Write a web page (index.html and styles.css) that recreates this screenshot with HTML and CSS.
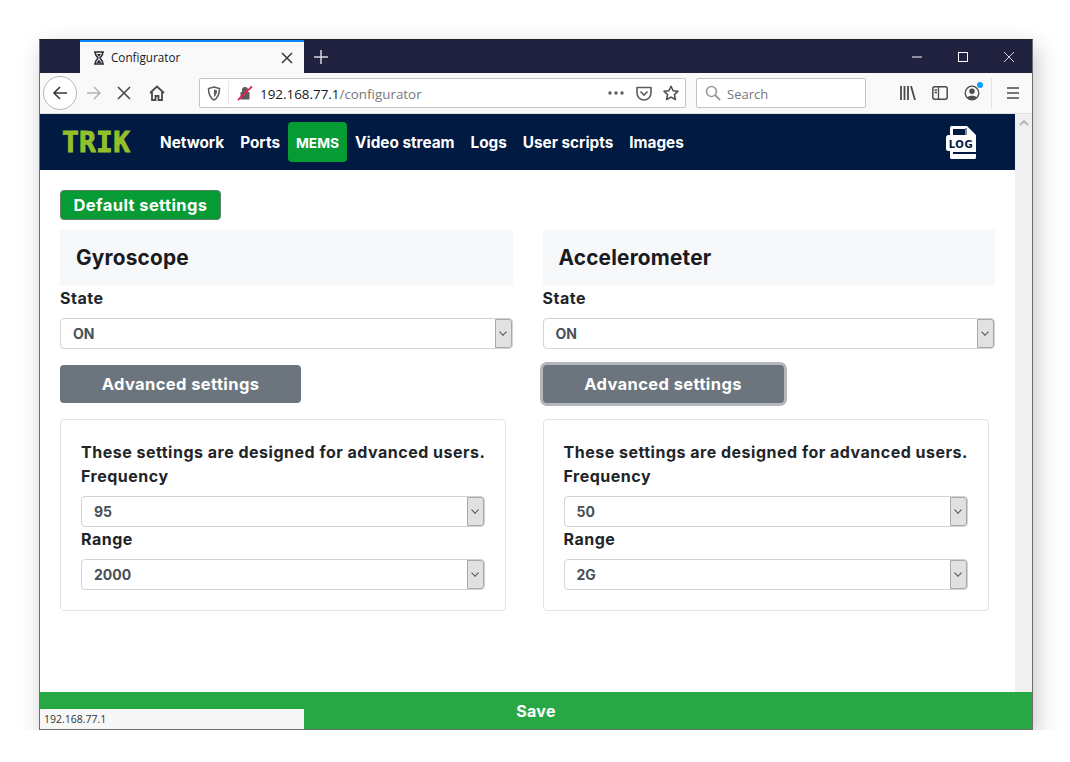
FILE: index.html
```html
<!DOCTYPE html>
<html lang="en">
<head>
    <meta charset="UTF-8">
    <title>Configurator</title>
    <link rel="stylesheet" href="styles.css">
</head>
<body>

    <div class="window">

        <div class="titlebar">
            <div class="tab">
                <svg class="tab-icon" width="14" height="14" viewBox="0 0 14 14"><path d="M2 1h10M2 13h10M3.500 1v2.500L6 7l-2.500 3.500V13h7v-2.500L8 7l2.500-3.500V1z" fill="none" stroke="#2b2b33" stroke-width="1.500"/><path d="M4.500 12l2.500-3.500L9.500 12zM5 3h4L7 6z" fill="#2b2b33"/></svg>
                <span class="tab-title">Configurator</span>
                <svg class="tab-close" width="12" height="12" viewBox="0 0 12 12"><path d="M1 1l10 10M11 1L1 11" stroke="#38383d" stroke-width="1.500"/></svg>
            </div>
            <svg class="new-tab" width="14" height="14" viewBox="0 0 14 14"><path d="M7 0v14M0 7h14" stroke="#d8d8de" stroke-width="1.500"/></svg>
            <div class="win-controls">
                <svg width="10" height="10" viewBox="0 0 10 10"><path d="M0 5h10" stroke="#fff"/></svg>
                <svg width="10" height="10" viewBox="0 0 10 10"><rect x="0.500" y="0.500" width="9" height="9" fill="none" stroke="#fff"/></svg>
                <svg width="10" height="10" viewBox="0 0 10 10"><path d="M0 0l10 10M10 0L0 10" stroke="#fff" stroke-width="0.800"/></svg>
            </div>
        </div>

        <div class="toolbar">
            <div class="back-btn">
                <svg width="16" height="16" viewBox="0 0 16 16"><path d="M15 8H2M8 2L2 8l6 6" fill="none" stroke="#38383d" stroke-width="1.600"/></svg>
            </div>
            <svg class="tool-forward" width="16" height="16" viewBox="0 0 16 16"><path d="M1 8h13M8 2l6 6-6 6" fill="none" stroke="#b5b5b8" stroke-width="1.600"/></svg>
            <svg class="tool-stop" width="14" height="14" viewBox="0 0 14 14"><path d="M1 1l12 12M13 1L1 13" stroke="#4a4a4f" stroke-width="1.600"/></svg>
            <svg class="tool-home" width="16" height="16" viewBox="0 0 16 16"><path d="M1 8l7-6.500L15 8M3 7v8h3.500v-4h3v4H13V7" fill="none" stroke="#4a4a4f" stroke-width="1.800"/></svg>

            <div class="urlbar">
                <svg class="url-shield" width="14" height="15" viewBox="0 0 14 15"><path d="M7 1l5.500 1.500c0 5-1 9-5.500 11.500C2.500 11.500 1.500 7.500 1.500 2.500z" fill="none" stroke="#5b5b60" stroke-width="1.500"/><path d="M7 3.500l3 .8c0 3-.6 5-3 6.700z" fill="#5b5b60"/></svg>
                <span class="url-sep"></span>
                <svg class="url-lock" width="16" height="16" viewBox="0 0 16 16"><path d="M5 7V5a3 3 0 016 0v2h1.500v7.500h-9V7z" fill="#5b5b60"/><path d="M1 15L15 1.500" stroke="#e22850" stroke-width="1.800"/></svg>
                <span class="url-text">192.168.77.1<span class="url-path">/configurator</span></span>
                <svg class="url-dots" width="16" height="4" viewBox="0 0 16 4"><circle cx="2" cy="2" r="1.700" fill="#5b5b60"/><circle cx="8" cy="2" r="1.700" fill="#5b5b60"/><circle cx="14" cy="2" r="1.700" fill="#5b5b60"/></svg>
                <svg width="16" height="15" viewBox="0 0 16 15"><path d="M1 1.500h14v5.500a7 7 0 01-14 0z" fill="none" stroke="#5b5b60" stroke-width="1.600" stroke-linejoin="round"/><path d="M4.500 5.500L8 9l3.500-3.500" fill="none" stroke="#5b5b60" stroke-width="1.600"/></svg>
                <svg class="url-star" width="16" height="16" viewBox="0 0 16 16"><path d="M8 1.200l2.100 4.500 4.900.6-3.600 3.300 1 4.900L8 12.100l-4.400 2.400 1-4.900L1 6.300l4.900-.6z" fill="none" stroke="#4a4a4f" stroke-width="1.500" stroke-linejoin="round"/></svg>
            </div>

            <div class="searchbar">
                <svg width="16" height="16" viewBox="0 0 16 16"><circle cx="6.500" cy="6.500" r="5" fill="none" stroke="#9a9a9e" stroke-width="1.600"/><path d="M10 10l5 5" stroke="#9a9a9e" stroke-width="1.800"/></svg>
                <span class="search-text">Search</span>
            </div>

            <svg class="tool-library" width="16" height="14" viewBox="0 0 16 14"><path d="M1 0v14M4.500 0v14M8 0v14M11 0l4 14" fill="none" stroke="#4a4a4f" stroke-width="1.800"/></svg>
            <svg class="tool-sidebar" width="16" height="14" viewBox="0 0 16 14"><rect x="0.800" y="0.800" width="14.400" height="12.400" rx="2" fill="none" stroke="#4a4a4f" stroke-width="1.500"/><path d="M6.500 1v12M2.500 4h2.500M2.500 6.500h2.500" stroke="#4a4a4f" stroke-width="1.300"/></svg>
            <span class="tool-account">
                <svg width="16" height="16" viewBox="0 0 16 16"><circle cx="8" cy="8" r="6.800" fill="none" stroke="#4a4a4f" stroke-width="1.300"/><circle cx="8" cy="6.300" r="2.700" fill="#4a4a4f"/><path d="M3.300 12.500c1-2.500 8.400-2.500 9.400 0-2.500 2.400-6.900 2.400-9.400 0z" fill="#4a4a4f"/></svg>
                <span class="account-dot"></span>
            </span>
            <span class="tool-sep"></span>
            <svg class="tool-menu" width="12" height="12" viewBox="0 0 12 12"><path d="M0 1h12M0 6h12M0 11h12" stroke="#4a4a4f" stroke-width="1.500"/></svg>
        </div>

        <div class="viewport">
            <div class="page">
                <nav class="navbar">
                    <span class="logo">TRIK</span>
                    <a class="nav-link" href="#">Network</a>
                    <a class="nav-link" href="#">Ports</a>
                    <a class="nav-link active" href="#">MEMS</a>
                    <a class="nav-link" href="#">Video stream</a>
                    <a class="nav-link" href="#">Logs</a>
                    <a class="nav-link" href="#">User scripts</a>
                    <a class="nav-link" href="#">Images</a>
                    <svg class="log-icon" width="31" height="33" viewBox="0 0 31 33">
                        <path d="M4 1.500A1.500 1.500 0 015.500 0H21l9 9v22.500a1.500 1.500 0 01-1.500 1.500H5.500A1.500 1.500 0 014 31.500z" fill="#fff"/>
                        <path d="M7 3h12v7H7z" fill="#001a42"/>
                        <path d="M20 2v8h8" fill="none" stroke="#001a42" stroke-width="1"/>
                        <rect x="0" y="9" width="30" height="16" rx="2.500" fill="#fff"/>
                        <text x="15" y="21.500" text-anchor="middle" class="log-text">LOG</text>
                        <path d="M7 27h23" stroke="#001a42" stroke-width="2"/>
                    </svg>
                </nav>

                <div class="main">
                    <button class="btn btn-default">Default settings</button>

                    <div class="columns">
                        <section class="sensor">
                            <h2 class="sensor-title">Gyroscope</h2>
                            <label class="field-label">State</label>
                            <div class="select"><span>ON</span><i class="select-arrow"></i></div>
                            <button class="btn btn-advanced">Advanced settings</button>
                            <div class="card">
                                <p class="card-note">These settings are designed for advanced users.</p>
                                <label class="field-label">Frequency</label>
                                <div class="select"><span>95</span><i class="select-arrow"></i></div>
                                <label class="field-label">Range</label>
                                <div class="select"><span>2000</span><i class="select-arrow"></i></div>
                            </div>
                        </section>

                        <section class="sensor">
                            <h2 class="sensor-title">Accelerometer</h2>
                            <label class="field-label">State</label>
                            <div class="select"><span>ON</span><i class="select-arrow"></i></div>
                            <button class="btn btn-advanced focused">Advanced settings</button>
                            <div class="card">
                                <p class="card-note">These settings are designed for advanced users.</p>
                                <label class="field-label">Frequency</label>
                                <div class="select"><span>50</span><i class="select-arrow"></i></div>
                                <label class="field-label">Range</label>
                                <div class="select"><span>2G</span><i class="select-arrow"></i></div>
                            </div>
                        </section>
                    </div>
                </div>
            </div>
            <div class="scrollbar">
                <svg width="10" height="6" viewBox="0 0 10 6"><path d="M1 5l4-4 4 4" fill="none" stroke="#b5b5b5" stroke-width="1.800"/></svg>
            </div>

            <div class="save-bar">Save</div>
            <div class="status">192.168.77.1</div>
        </div>
    </div>

</body>
</html>
```

FILE: styles.css
```css
body {
    margin: 0;
    padding: 39px 0 0 39px;
    background-color: #ffffff;
    font-family: Inter, 'Liberation Sans', sans-serif;
    color: #212529;
}

.window {
    width: 992px;
    height: 689px;
    border: 1px solid #6e6e6e;
    border-top-color: #222;
    display: flex;
    flex-direction: column;
    box-shadow: 4px 8px 22px rgba(0, 0, 0, 0.22);
}

/* browser chrome */
.titlebar {
    height: 33px;
    background-color: #20223f;
    display: flex;
    align-items: center;
    padding-left: 40px;
    flex-shrink: 0;
}

.tab {
    width: 224px;
    height: 33px;
    box-sizing: border-box;
    border-top: 2px solid #0a84ff;
    background-color: #f9f9fa;
    display: flex;
    align-items: center;
    padding: 0 11px 0 12px;
    font-family: 'Open Sans', sans-serif;
    font-size: 11.700px;
    color: #18181c;
}

.tab-icon {
    margin-right: 5px;
}

.tab-title {
    flex: 1;
    padding-bottom: 2px;
}

.new-tab {
    margin-left: 10px;
}

.win-controls {
    margin-left: auto;
    display: flex;
    gap: 36px;
    padding-right: 18px;
}

.toolbar {
    height: 41px;
    background-color: #f9f9fa;
    border-bottom: 1px solid #e1e1e3;
    box-sizing: border-box;
    display: flex;
    align-items: center;
    padding-left: 3px;
    flex-shrink: 0;
}

.back-btn {
    width: 32px;
    height: 32px;
    border: 1px solid #b8b8ba;
    border-radius: 50%;
    background-color: #ffffff;
    display: flex;
    align-items: center;
    justify-content: center;
}

.tool-forward {
    margin-left: 9px;
}

.tool-stop {
    margin-left: 15px;
}

.tool-home {
    margin-left: 18px;
}

.urlbar {
    width: 487px;
    height: 30px;
    margin-left: 34px;
    box-sizing: border-box;
    background-color: #ffffff;
    border: 1px solid #c4c4c6;
    border-radius: 2px;
    display: flex;
    align-items: center;
    padding: 0 6px 0 7px;
    font-family: 'Open Sans', sans-serif;
    font-size: 13.400px;
    color: #18181c;
}

.url-sep {
    width: 1px;
    height: 24px;
    background-color: #e8e8ea;
    margin: 0 8px 0 7px;
}

.url-text {
    margin-left: 7px;
    padding-top: 2px;
    flex: 1;
}

.url-path {
    color: #77777c;
}

.url-dots {
    margin-right: 12px;
}

.url-star {
    margin-left: 11px;
}

.searchbar {
    width: 170px;
    height: 30px;
    margin-left: 10px;
    box-sizing: border-box;
    background-color: #ffffff;
    border: 1px solid #c4c4c6;
    border-radius: 2px;
    display: flex;
    align-items: center;
    gap: 6px;
    padding-left: 8px;
    font-family: 'Open Sans', sans-serif;
    font-size: 13px;
    color: #77777c;
}

.search-text {
    padding-top: 2px;
}

.tool-library {
    margin-left: 34px;
}

.tool-sidebar {
    margin-left: 16px;
}

.tool-account {
    margin-left: 16px;
    position: relative;
    display: flex;
}

.account-dot {
    position: absolute;
    top: -3px;
    right: -3px;
    width: 6px;
    height: 6px;
    border-radius: 50%;
    background-color: #0a9dff;
}

.tool-sep {
    width: 1px;
    height: 30px;
    margin-left: 11px;
    background-color: #e1e1e3;
}

.tool-menu {
    margin-left: 15px;
}

/* page */
.viewport {
    flex: 1;
    display: flex;
    position: relative;
    overflow: hidden;
}

.page {
    width: 975px;
    flex-shrink: 0;
    background-color: #ffffff;
}

.scrollbar {
    flex: 1;
    background-color: #f0f0f0;
    display: flex;
    justify-content: center;
    align-items: flex-start;
    padding-top: 6px;
}

.navbar {
    height: 56px;
    background-color: #001a42;
    display: flex;
    align-items: center;
    padding-left: 22px;
}

.logo {
    flex: none;
    width: 90px;
    font-family: 'DejaVu Sans Mono', monospace;
    font-size: 28px;
    font-weight: 700;
    letter-spacing: 0.2px;
    color: #93bf2b;
    -webkit-text-stroke: 0.9px #93bf2b;
}

.nav-link {
    height: 40px;
    line-height: 42px;
    padding: 0 8px;
    border-radius: 4px;
    color: #ffffff;
    font-size: 15.300px;
    font-weight: 700;
    text-decoration: none;
}

.nav-link.active {
    background-color: #069b35;
    font-size: 13.800px;
}

.log-icon {
    margin-left: auto;
    margin-right: 38px;
}

.log-text {
    font-family: 'DejaVu Sans', sans-serif;
    font-size: 10px;
    font-weight: 700;
    letter-spacing: 0.6px;
    fill: #001a42;
}

.main {
    padding: 20px 20px 0;
}

.btn {
    display: block;
    border: none;
    border-radius: 4px;
    color: #ffffff;
    font-family: Inter, 'Liberation Sans', sans-serif;
    font-size: 16.500px;
    font-weight: 700;
    letter-spacing: 0.4px;
}

.btn-default {
    width: 161px;
    height: 30px;
    padding: 0;
    background-color: #069b35;
    border: 1px solid #5c7f68;
}

.columns {
    display: flex;
    gap: 30px;
    margin-top: 10px;
}

.sensor {
    width: 452.500px;
}

.sensor-title {
    margin: 0;
    height: 56px;
    line-height: 56px;
    padding-left: 16px;
    background-color: #f7f8fa;
    font-size: 20.800px;
    font-weight: 700;
    letter-spacing: 0.2px;
    color: #1a1a1f;
}

.field-label {
    display: block;
    height: 24px;
    line-height: 24px;
    font-size: 16px;
    font-weight: 700;
    letter-spacing: 0.5px;
    color: #212529;
}

.sensor > .field-label {
    margin-bottom: 8px;
}

.select {
    height: 31px;
    box-sizing: border-box;
    border: 1px solid #ced4da;
    border-radius: 4px;
    background-color: #ffffff;
    display: flex;
    align-items: center;
    justify-content: space-between;
    padding-left: 12px;
    font-size: 14px;
    font-weight: 700;
    color: #495057;
}

.select-arrow {
    width: 17px;
    height: 29px;
    box-sizing: border-box;
    border: 1px solid #a9a9a9;
    border-radius: 0 3px 3px 0;
    background-color: #e1e1e1;
    position: relative;
}

.select-arrow::after {
    content: "";
    position: absolute;
    left: 4px;
    top: 9px;
    width: 5px;
    height: 5px;
    border-right: 1px solid #444;
    border-bottom: 1px solid #444;
    transform: rotate(45deg) scale(0.9);
}

.btn-advanced {
    width: 241px;
    height: 38px;
    margin-top: 16px;
    background-color: #6c757d;
}

.btn-advanced.focused {
    box-shadow: 0 0 0 3px #b3b8bd;
}

.card {
    width: 446px;
    height: 192px;
    box-sizing: border-box;
    margin-top: 16px;
    padding: 20px 20px 0;
    border: 1px solid #e2e2e4;
    border-radius: 4px;
}

.card-note {
    margin: 0;
    height: 24px;
    line-height: 24px;
    font-size: 16px;
    font-weight: 700;
    letter-spacing: 0.5px;
    white-space: nowrap;
}

.card .select {
    margin-top: 8px;
}

/* overlays */
.save-bar {
    position: absolute;
    left: 0;
    right: 0;
    bottom: 0;
    height: 37px;
    line-height: 39px;
    background-color: #28a745;
    color: #ffffff;
    text-align: center;
    font-size: 16px;
    font-weight: 700;
    letter-spacing: 0.3px;
}

.status {
    position: absolute;
    left: 0;
    bottom: 0;
    width: 264px;
    height: 20px;
    line-height: 21px;
    box-sizing: border-box;
    padding-left: 4px;
    background-color: #f7f7f7;
    color: #333;
    font-family: 'Open Sans', sans-serif;
    font-size: 10.500px;
}
```
